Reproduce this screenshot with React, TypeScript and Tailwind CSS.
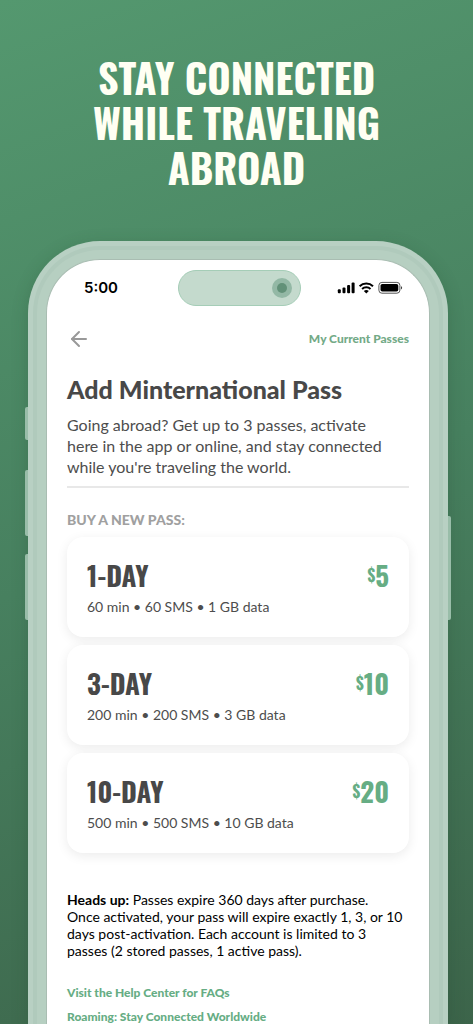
import { ArrowLeft } from 'lucide-react';

type Pass = {
  name: string;
  details: string;
  price: number;
};

const passes: Pass[] = [
  { name: '1-DAY', details: '60 min • 60 SMS • 1 GB data', price: 5 },
  { name: '3-DAY', details: '200 min • 200 SMS • 3 GB data', price: 10 },
  { name: '10-DAY', details: '500 min • 500 SMS • 10 GB data', price: 20 },
];

function StatusIcons() {
  return (
    <svg viewBox="0 0 66 14" className="h-[14px] w-[66px]" aria-hidden="true">
      {/* Signal */}
      <rect x="0.8" y="8.3" width="3" height="4" rx="1" />
      <rect x="5.5" y="6.4" width="3" height="5.9" rx="1" />
      <rect x="10.1" y="4" width="3" height="8.3" rx="1" />
      <rect x="14.6" y="1.4" width="3" height="10.9" rx="1" />
      {/* Wifi */}
      <path
        d="M22.6 5.3a9.6 9.6 0 0 1 13.4 0M25.1 8a6 6 0 0 1 8.4 0"
        fill="none"
        stroke="#000"
        strokeWidth="2"
      />
      <path d="M26.8 10a3.9 3.9 0 0 1 5 0l-2.5 2.6z" />
      {/* Battery */}
      <rect x="41.9" y="1.4" width="21" height="10.8" rx="3" fill="none" stroke="#555" />
      <rect x="43.5" y="3" width="17.8" height="7.6" rx="1.8" />
      <path d="M64 5.2c1.5.4 1.5 2.8 0 3.2z" fill="#444" />
    </svg>
  );
}

function StatusBar() {
  return (
    <div className="grid grid-cols-[1fr_auto_1fr] items-center pt-[10px] pl-0.5">
      <span className="pl-[35px] font-['Inter',sans-serif] text-[15px] font-semibold text-black">5:00</span>
      <div className="flex h-9 w-[123px] items-center justify-end rounded-full border border-[#a5cdb7] bg-[#c4dacd] pr-2">
        <div className="flex size-5 items-center justify-center rounded-full bg-[#93b8a5]">
          <div className="size-[10px] rounded-full bg-[#629178]" />
        </div>
      </div>
      <div className="flex justify-end pr-[26px]">
        <StatusIcons />
      </div>
    </div>
  );
}

function PassCard({ pass }: { pass: Pass }) {
  return (
    <button
      type="button"
      className="flex h-[100px] w-full items-start justify-between rounded-2xl bg-white px-5 pt-5 text-left shadow-[0_3px_12px_rgba(0,0,0,0.08)]"
    >
      <span className="flex flex-col">
        <span className="font-['Oswald','Roboto_Condensed','Open_Sans_Condensed','Liberation_Sans_Narrow',sans-serif] text-[27px] leading-9 font-bold text-[#484848]">
          {pass.name}
        </span>
        <span className="mt-1 text-sm leading-5 text-[#4d4d4d]">{pass.details}</span>
      </span>
      <span className="flex items-center font-['Oswald','Roboto_Condensed','Open_Sans_Condensed','Liberation_Sans_Narrow',sans-serif] leading-9 font-bold text-[#66ad84]">
        <span className="text-base leading-9">$</span>
        <span className="text-[27px]">{pass.price}</span>
      </span>
    </button>
  );
}

export default function App() {
  return (
    <main className="flex min-h-screen flex-col overflow-hidden bg-linear-160 from-[#54986f] via-[#47805f] to-[#3c644a] font-['Lato',sans-serif]">
      <h1 className="mx-auto max-w-[320px] pt-[55px] text-center font-['Oswald','Roboto_Condensed','Open_Sans_Condensed','Liberation_Sans_Narrow',sans-serif] text-[40px] leading-[45px] font-bold text-[#fffff3]">
        STAY CONNECTED WHILE TRAVELING ABROAD
      </h1>

      {/* Phone */}
      <div className="relative mt-[51px] mr-[22px] ml-[25px] flex flex-1 flex-col px-[3px]">
        <div className="absolute top-[166px] left-0 h-[33px] w-[3px] rounded-l-xs bg-[#99bda9]" />
        <div className="absolute top-[229px] left-0 h-[66px] w-[3px] rounded-l-xs bg-[#99bda9]" />
        <div className="absolute top-[313px] left-0 h-[66px] w-[3px] rounded-l-xs bg-[#99bda9]" />
        <div className="absolute top-[275px] right-0 h-[104px] w-[3px] rounded-r-xs bg-[#99bda9]" />

        <div className="flex flex-1 flex-col rounded-t-[72px] bg-[#b8d0c3] px-[5px] pt-[5px] shadow-[0_4px_16px_rgba(30,70,45,0.25)]">
          <div className="flex flex-1 flex-col rounded-t-[67px] border-x-4 border-t-4 border-[#b0cabc] bg-[#b6cfc1] px-[9px] pt-[9px]">
            <div className="flex flex-1 flex-col rounded-t-[54px] border-x border-t border-[#a9bdb2] bg-white">
              <StatusBar />

              <div className="px-5">
                <div className="mt-[21px] flex h-6 items-center justify-between">
                  <button type="button" aria-label="Back" className="text-[#999]">
                    <ArrowLeft className="size-6" strokeWidth={2} />
                  </button>
                  <a href="#passes" className="text-xs font-black text-[#73aa87]">
                    My Current Passes
                  </a>
                </div>

                <h2 className="mt-[22px] text-[25px] leading-8 font-black text-[#484848]">Add Minternational Pass</h2>
                <div className="mt-[9px] border-b-2 border-[#e8e8e8] pb-[9px]">
                  <p className="max-w-[330px] text-base leading-[21px] text-[#4d4d4d]">
                    Going abroad? Get up to 3 passes, activate here in the app or online, and stay connected while
                    you're traveling the world.
                  </p>
                </div>

                <h3 className="mt-[22px] text-sm leading-5 font-black text-[#a0a0a0]">BUY A NEW PASS:</h3>
                <div id="passes" className="mt-[7px] flex flex-col gap-2">
                  {passes.map((pass) => (
                    <PassCard key={pass.name} pass={pass} />
                  ))}
                </div>

                <p className="mt-[38px] max-w-[337px] text-sm leading-[17px] text-black">
                  <strong>Heads up:</strong> Passes expire 360 days after purchase. Once activated, your pass will
                  expire exactly 1, 3, or 10 days post-activation. Each account is limited to 3 passes (2 stored
                  passes, 1 active pass).
                </p>

                <div className="mt-6 flex flex-col items-start gap-1 text-xs leading-5 font-black text-[#66ad84]">
                  <a href="#faqs">Visit the Help Center for FAQs</a>
                  <a href="#roaming">Roaming: Stay Connected Worldwide</a>
                </div>
              </div>
            </div>
          </div>
        </div>
      </div>
    </main>
  );
}
